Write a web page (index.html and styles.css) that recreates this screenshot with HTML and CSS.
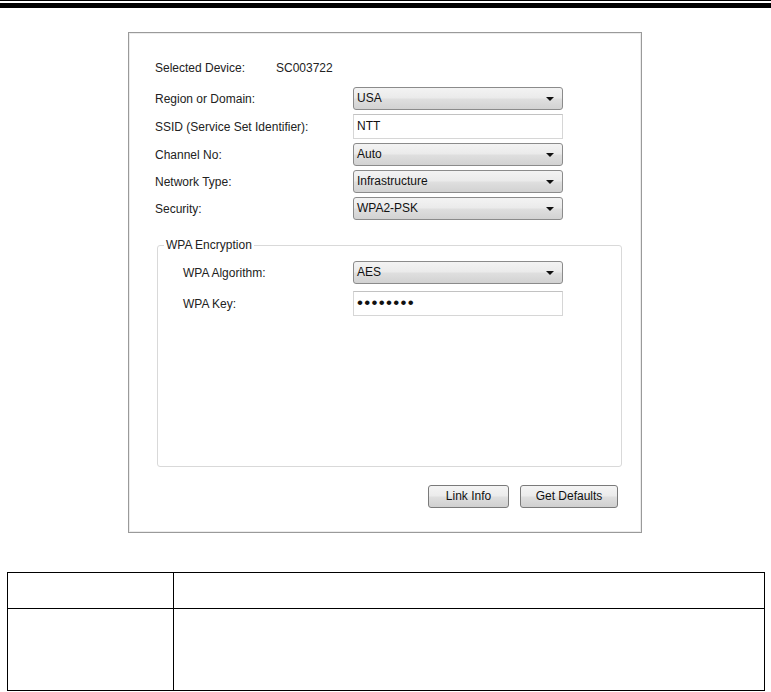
FILE: index.html
```html
<!DOCTYPE html>
<html>
<head>
<meta charset="utf-8">
<link rel="stylesheet" href="styles.css">
</head>
<body>
<div class="rule"><div class="rule-thin"></div><div class="rule-thick"></div></div>

<div class="dialog">
  <div class="info">
    <span class="info-label">Selected Device:</span>
    <span class="info-value">SC003722</span>
  </div>

  <div class="form">
    <span class="label">Region or Domain:</span>
    <div class="combo">USA<span class="arrow"></span></div>
    <span class="label">SSID (Service Set Identifier):</span>
    <div class="field">NTT</div>
    <span class="label">Channel No:</span>
    <div class="combo">Auto<span class="arrow"></span></div>
    <span class="label">Network Type:</span>
    <div class="combo">Infrastructure<span class="arrow"></span></div>
    <span class="label">Security:</span>
    <div class="combo">WPA2-PSK<span class="arrow"></span></div>
  </div>

  <div class="group">
    <span class="legend">WPA Encryption</span>
    <div class="form form-inner">
      <span class="label">WPA Algorithm:</span>
      <div class="combo">AES<span class="arrow"></span></div>
      <span class="label">WPA Key:</span>
      <div class="field"><span class="dots">••••••••</span></div>
    </div>
  </div>

  <div class="buttons">
    <div class="btn btn-link">Link Info</div>
    <div class="btn btn-defaults">Get Defaults</div>
  </div>
</div>

<table class="doc">
  <tr class="doc-head"><td class="doc-c1"></td><td></td></tr>
  <tr class="doc-body"><td class="doc-c1"></td><td></td></tr>
</table>
</body>
</html>
```

FILE: styles.css
```css
* { box-sizing: border-box; }

body {
  margin: 0;
  background: #fff;
  font-family: "Liberation Sans", Arial, sans-serif;
  font-size: 12px;
  color: #222;
}

.rule { height: 8px; }
.rule-thin { height: 1px; background: #000; }
.rule-thick { height: 5px; background: #000; margin-top: 2px; }

.dialog {
  margin: 24px 0 0 128px;
  width: 514px;
  height: 501px;
  border: 1px solid #9a9a9a;
  box-shadow: inset 0 0 0 1px #ececec;
  padding: 27px 0 0 26px;
  display: flex;
  flex-direction: column;
}

.info {
  display: flex;
  line-height: 16px;
}
.info-label { width: 121px; }

.form {
  margin-top: 11px;
  display: grid;
  grid-template-columns: 198px 210px;
  row-gap: 4px;
  align-items: center;
}

.label { line-height: 16px; }

.combo {
  position: relative;
  height: 23px;
  border: 1px solid #8b8b8b;
  border-radius: 3px;
  background: linear-gradient(#f3f3f3 0%, #ebebeb 45%, #dedede 55%, #d2d2d2 100%);
  padding-left: 3px;
  line-height: 21px;
  color: #111;
}
.arrow {
  position: absolute;
  right: 8px;
  top: 9px;
  width: 0;
  height: 0;
  border-left: 4px solid transparent;
  border-right: 4px solid transparent;
  border-top: 4px solid #111;
}

.field {
  height: 25px;
  border: 1px solid #d6d6d6;
  border-top-color: #c2c2c2;
  background: #fff;
  padding-left: 3px;
  line-height: 22px;
  color: #111;
}
.dots {
  font-size: 17px;
  letter-spacing: 1.3px;
  line-height: 22px;
}

.group {
  position: relative;
  margin: 25px 0 0 2px;
  width: 465px;
  height: 222px;
  border: 1px solid #d9d9d9;
  border-radius: 3px;
  padding: 15px 0 0 25px;
}
.legend {
  position: absolute;
  top: -9px;
  left: 6px;
  padding: 0 2px;
  background: #fff;
  line-height: 16px;
}
.form-inner {
  margin-top: 0;
  grid-template-columns: 170px 210px;
  row-gap: 7px;
}

.buttons {
  margin-top: 18px;
  display: flex;
  justify-content: flex-end;
  gap: 11px;
  padding-right: 23px;
}
.btn {
  height: 23px;
  border: 1px solid #7a7a7a;
  border-radius: 3px;
  background: linear-gradient(#f4f4f4 0%, #ececec 45%, #dedede 55%, #d0d0d0 100%);
  text-align: center;
  line-height: 21px;
  color: #111;
}
.btn-link { width: 81px; }
.btn-defaults { width: 98px; }

.doc {
  margin: 39px 0 0 7px;
  width: 758px;
  border-collapse: collapse;
}
.doc td {
  border: 1.5px solid #000;
  padding: 0;
}
.doc-c1 { width: 166px; }
.doc-head td { height: 36px; }
.doc-body td { height: 82px; }
```
